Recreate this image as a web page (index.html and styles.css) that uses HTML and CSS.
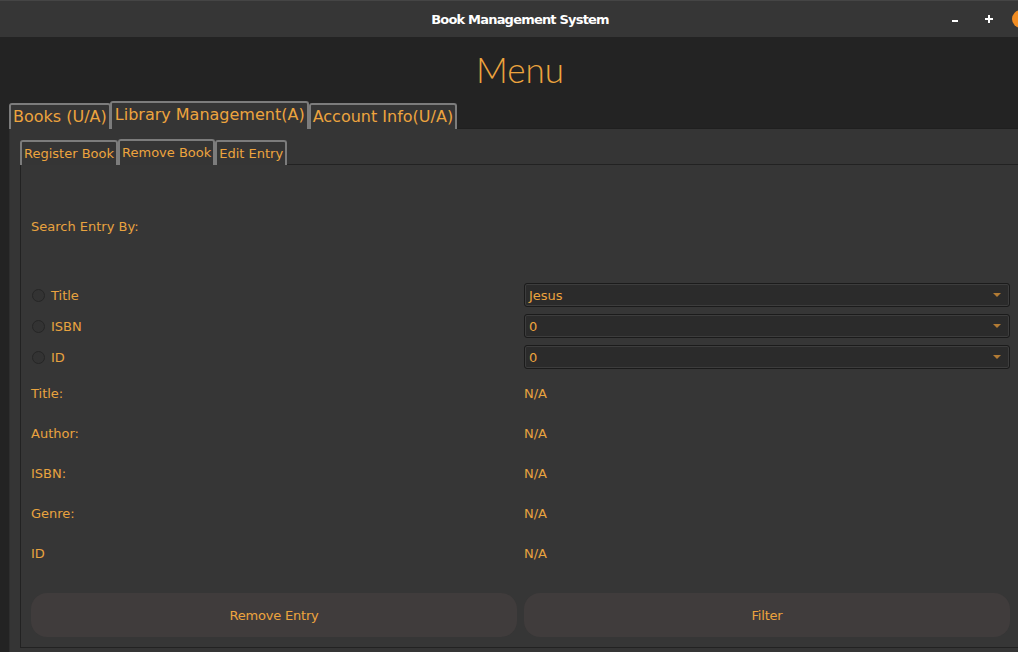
FILE: index.html
```html
<!DOCTYPE html>
<html>
<head>
<meta charset="utf-8">
<link rel="stylesheet" href="styles.css">
</head>
<body>
<div class="window">
  <header class="titlebar">
    <div class="title">Book Management System</div>
    <div class="controls">
      <svg class="ctl-min" width="6" height="3" viewBox="0 0 6 3"><rect x="0" y="0" width="6" height="2" fill="#fff"/></svg>
      <svg class="ctl-max" width="8" height="8" viewBox="0 0 8 8"><rect x="3" y="0" width="2" height="8" fill="#fff"/><rect x="0" y="3" width="8" height="2" fill="#fff"/></svg>
      <span class="ctl-close"></span>
    </div>
  </header>
  <main class="main">
    <h1 class="menu-title">Menu</h1>
    <div class="tabs outer-tabs">
      <div class="tab">Books (U/A)</div>
      <div class="tab active">Library Management(A)</div>
      <div class="tab">Account Info(U/A)</div>
    </div>
    <section class="outer-panel">
      <div class="tabs inner-tabs">
        <div class="tab">Register Book</div>
        <div class="tab active">Remove Book</div>
        <div class="tab">Edit Entry</div>
      </div>
      <div class="inner-panel">
        <div class="form-grid">
          <div class="cell search-label">Search Entry By:</div>
          <div class="cell"></div>

          <label class="cell radio-row"><span class="radio"></span>Title</label>
          <div class="combo"><span>Jesus</span><span class="arrow"></span></div>

          <label class="cell radio-row"><span class="radio"></span>ISBN</label>
          <div class="combo"><span>0</span><span class="arrow"></span></div>

          <label class="cell radio-row"><span class="radio"></span>ID</label>
          <div class="combo"><span>0</span><span class="arrow"></span></div>

          <div class="cell info">Title:</div>
          <div class="cell info">N/A</div>
          <div class="cell info">Author:</div>
          <div class="cell info">N/A</div>
          <div class="cell info">ISBN:</div>
          <div class="cell info">N/A</div>
          <div class="cell info">Genre:</div>
          <div class="cell info">N/A</div>
          <div class="cell info">ID</div>
          <div class="cell info">N/A</div>

          <button class="btn">Remove Entry</button>
          <button class="btn">Filter</button>
        </div>
      </div>
    </section>
  </main>
</div>
</body>
</html>
```

FILE: styles.css
```css
html, body {
  margin: 0;
  padding: 0;
  width: 1018px;
  height: 652px;
  overflow: hidden;
  background: #232323;
}

.window {
  width: 1018px;
  height: 652px;
  display: flex;
  flex-direction: column;
  overflow: hidden;
  font-family: "DejaVu Sans", "Liberation Sans", sans-serif;
  color: #e9a33f;
}

.titlebar {
  height: 36px;
  flex-shrink: 0;
  display: flex;
  align-items: center;
  background: #363636;
  border-top: 1px solid #454545;
  overflow: hidden;
}

.title {
  flex: 1;
  padding-left: 124px;
  text-align: center;
  color: #ffffff;
  font-family: "DejaVu Sans", sans-serif;
  font-weight: bold;
  font-size: 13px;
  letter-spacing: -0.8px;
  white-space: nowrap;
}

.controls {
  flex-shrink: 0;
  width: 102px;
  display: flex;
  align-items: center;
}

.ctl-min {
  flex-shrink: 0;
  margin-left: 36px;
  margin-top: 5px;
}

.ctl-max {
  flex-shrink: 0;
  margin-left: 27px;
  margin-top: 0;
}

.ctl-close {
  display: block;
  width: 18px;
  height: 18px;
  margin-left: 19px;
  border-radius: 50%;
  background: #f08c22;
  flex-shrink: 0;
}

.main {
  flex: 1;
  display: flex;
  flex-direction: column;
  background: #232323;
  padding-left: 9px;
}

.menu-title {
  margin: 0;
  padding-left: 13px;
  height: 64px;
  line-height: 64px;
  text-align: center;
  font-family: "Lato", "Open Sans", sans-serif;
  font-weight: 300;
  font-size: 35px;
  color: #eda43e;
}

.tabs {
  display: flex;
  align-items: flex-end;
  position: relative;
  z-index: 1;
}

.tab {
  background: #353535;
  border: 2px solid #7c7c7c;
  border-bottom: none;
  border-radius: 3px 3px 0 0;
  white-space: nowrap;
  color: #eda43e;
}

.outer-tabs {
  height: 28px;
  margin-bottom: -1px;
}

.outer-tabs .tab {
  font-size: 16px;
  height: 24px;
  line-height: 23px;
  padding: 0 2px;
}

.outer-tabs .tab.active {
  height: 26px;
  line-height: 24px;
  margin: 0 0 0 -1px;
  padding: 0 2px 0 3px;
}

.outer-panel {
  flex: 1;
  width: 1040px;
  background: #353535;
  border-top: 1px solid #1f1f1f;
  border-left: 1px solid #2e2e2e;
  padding: 10px 0 0 10px;
}

.inner-tabs {
  height: 26px;
  margin-bottom: -1px;
}

.inner-tabs .tab {
  font-size: 13px;
  height: 23px;
  line-height: 23px;
  padding: 0 2px;
}

.inner-tabs .tab.active {
  height: 24px;
  line-height: 23px;
  padding: 0 2px;
}

.inner-panel {
  width: 1010px;
  background: #363636;
  border-top: 1px solid #222222;
  border-left: 1px solid #222222;
  border-bottom: 1px solid #222222;
  padding: 9px 10px 10px 10px;
}

.form-grid {
  display: grid;
  grid-template-columns: 486px 486px;
  grid-template-rows: 102px 24px 24px 24px 33px 33px 33px 33px 33px 61px;
  column-gap: 7px;
  row-gap: 7px;
  font-size: 13px;
}

.cell {
  display: flex;
  align-items: center;
  white-space: nowrap;
}

.search-label,
.info {
  padding-top: 2px;
}

.radio-row {
  padding-left: 1px;
}

.radio {
  width: 11px;
  height: 11px;
  border-radius: 50%;
  border: 1px solid #262626;
  background: #333333;
  margin-right: 6px;
}

.combo {
  display: flex;
  align-items: center;
  justify-content: space-between;
  background: #2b2b2b;
  border: 1px solid #1b1b1b;
  border-radius: 3px;
  box-shadow: inset 0 0 0 1px #3d3d3d;
  padding: 0 8px 0 4px;
  color: #eda43e;
}

.arrow {
  width: 0;
  height: 0;
  border-left: 4px solid transparent;
  border-right: 4px solid transparent;
  border-top: 4px solid #b27b34;
}

.btn {
  align-self: end;
  height: 44px;
  border: none;
  border-radius: 16px;
  background: #403c3c;
  color: #eda43e;
  font-family: "DejaVu Sans", sans-serif;
  font-size: 13px;
  letter-spacing: -0.2px;
  padding: 0;
}
```
